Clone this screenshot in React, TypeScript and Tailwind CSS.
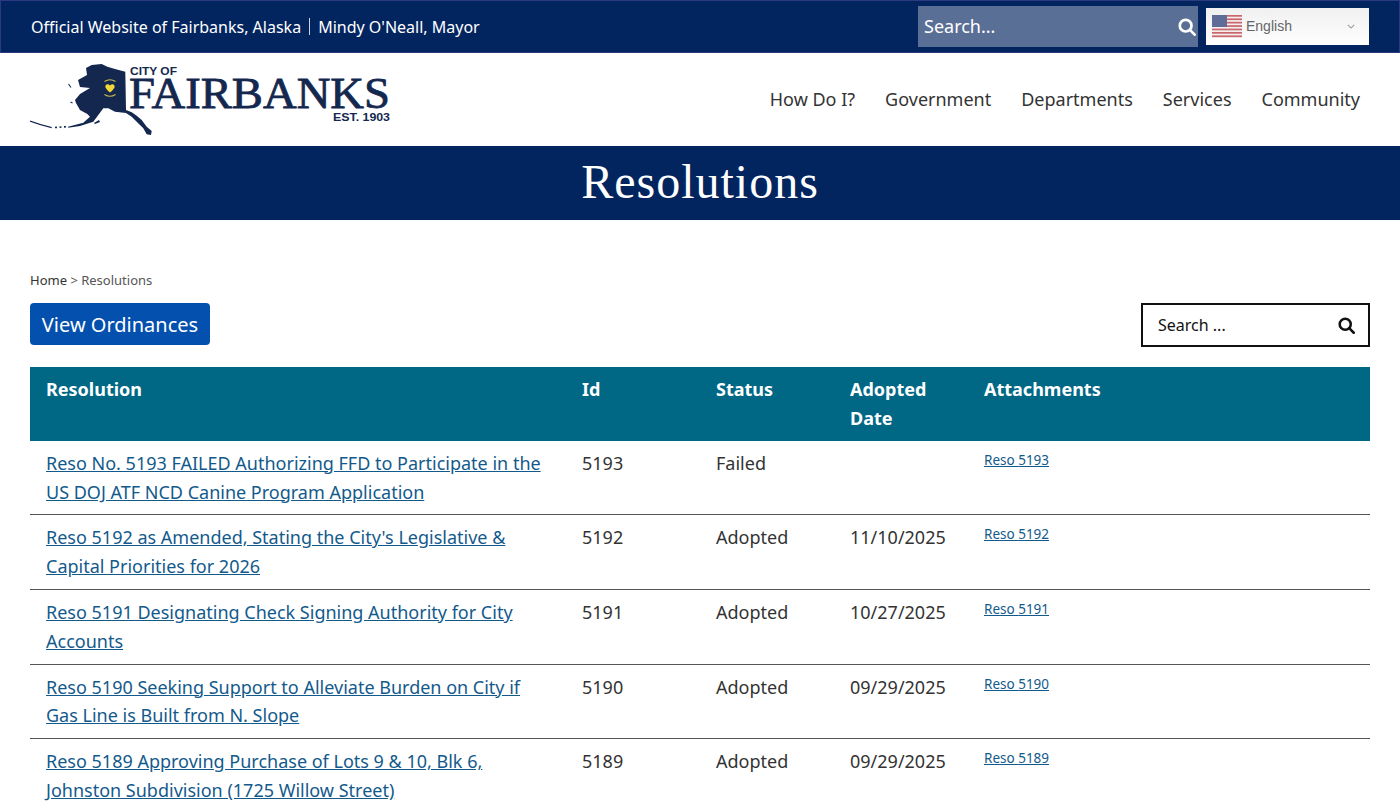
import React from "react";

const rows = [
  { title: "Reso No. 5193 FAILED Authorizing FFD to Participate in the US DOJ ATF NCD Canine Program Application", id: "5193", status: "Failed", date: "" },
  { title: "Reso 5192 as Amended, Stating the City's Legislative & Capital Priorities for 2026", id: "5192", status: "Adopted", date: "11/10/2025" },
  { title: "Reso 5191 Designating Check Signing Authority for City Accounts", id: "5191", status: "Adopted", date: "10/27/2025" },
  { title: "Reso 5190 Seeking Support to Alleviate Burden on City if Gas Line is Built from N. Slope", id: "5190", status: "Adopted", date: "09/29/2025" },
  { title: "Reso 5189 Approving Purchase of Lots 9 & 10, Blk 6, Johnston Subdivision (1725 Willow Street)", id: "5189", status: "Adopted", date: "09/29/2025" },
];

function SearchIcon({ className }: { className: string }) {
  return (
    <svg viewBox="0 0 20 20" className={className} fill="none" stroke="currentColor" strokeWidth="3">
      <circle cx="8.5" cy="8.5" r="6.5" />
      <path d="M13.2 13.2 18.5 18.5" strokeLinecap="round" />
    </svg>
  );
}

function Flag() {
  const stripes = [0, 1, 2, 3, 4, 5, 6];
  return (
    <svg viewBox="0 0 30 23" className="w-[30px] h-[23px] shrink-0">
      <rect width="30" height="23" fill="#f4eeee" />
      {stripes.map((i) => (
        <rect key={i} y={i * 3.4} width="30" height="1.7" fill="#c9676c" />
      ))}
      <rect width="15" height="12" fill="#5f6c98" />
    </svg>
  );
}

function Logo() {
  return (
    <svg viewBox="0 0 362 76" className="w-[362px] h-[76px]">
      <path
        fill="#14284f"
        d="M56 7 L61.7 4 L71.7 3 L77.3 5.7 L85 8 L95.3 10.7 L96 49 L101.7 51.3 L106.7 54.7 L111.7 59 L116.7 65.7 L121.7 70 L121 74 L116.7 73.3 L113.3 67.3 L106.7 60.7 L101.7 55.7 L96 52 L85 50.7 L78.3 47.3 L73.3 47.3 L68.3 54 L63.3 60.7 L50 65 L38.3 66.7 L38 65.7 L53.3 61.7 L60 55.7 L57.3 53 L50 49 L46 42 L45 39 L50 33 L60 27 L50 26 L48 19 L57 14 Z"
      />
      <path fill="none" stroke="#14284f" strokeWidth="1.2" d="M0 60 Q11 64 21.7 66.7" />
      <path fill="none" stroke="#14284f" strokeWidth="1.6" strokeDasharray="2 2.5" d="M25 66.5 L37 65.7" />
      <path fill="none" stroke="#14284f" strokeWidth="1.1" d="M38.5 23 L41 26.5 M40.5 41 L42.5 42" />
      <path fill="#14284f" d="M64 62 l5 -3 1 2 -5 2z" />
      <path fill="#f2d63a" d="M80 24.5 c-2 -2.5 -5.5 -1 -4.5 2 c0.8 1.8 2.8 3.6 4.5 5 c1.7 -1.4 3.7 -3.2 4.5 -5 c1 -3 -2.5 -4.5 -4.5 -2z" />
      <path fill="none" stroke="#c8b64a" strokeWidth="1.2" d="M74.5 20.5 Q80 17 85.5 20.5 M74.5 33.5 Q80 37 85.5 33.5" />
      <text x="100" y="14" fontFamily="'Liberation Sans', sans-serif" fontWeight="700" fontSize="10" fill="#14284f" textLength="47" lengthAdjust="spacingAndGlyphs">CITY OF</text>
      <text x="99" y="47" fontFamily="'Liberation Serif', serif" fontWeight="400" fontSize="45" fill="#14284f" stroke="#14284f" strokeWidth="0.8" textLength="261" lengthAdjust="spacingAndGlyphs">FAIRBANKS</text>
      <text x="303" y="60" fontFamily="'Liberation Sans', sans-serif" fontWeight="700" fontSize="10" fill="#14284f" textLength="57" lengthAdjust="spacingAndGlyphs">EST. 1903</text>
    </svg>
  );
}

export default function App() {
  return (
    <div className="w-[1400px] h-[804px] overflow-hidden bg-white text-[18px] leading-[28.8px] text-[#333] font-['Noto_Sans',sans-serif]">
      <header className="h-[53px] bg-[#03255f] border border-[#2b3a80] flex items-center justify-between pl-[30px] pr-[30px] text-white">
        <div className="flex items-center text-[16px] pt-[1px]">
          <span>Official Website of Fairbanks, Alaska</span>
          <span className="w-px h-[17px] bg-white/80 mx-2"></span>
          <span>Mindy O'Neall, Mayor</span>
        </div>
        <div className="flex items-center gap-2">
          <div className="w-[280px] h-[41px] bg-[#5a6f96] flex items-center justify-between pl-[6px] pr-[2px] text-[18px]">
            <span>Search...</span>
            <SearchIcon className="w-[18px] h-[18px]" />
          </div>
          <div className="w-[163px] h-[37px] bg-gradient-to-b from-[#f0f0f0] to-white flex items-center pl-[6px] pr-[14px] text-[#666] text-[14px] font-['Liberation_Sans',sans-serif]">
            <Flag />
            <span className="ml-1 flex-1 -mt-[1px]">English</span>
            <svg viewBox="0 0 10 6" className="w-[8px] h-[5px]" fill="none" stroke="#999" strokeWidth="1.3">
              <path d="M1 1l4 4 4-4" />
            </svg>
          </div>
        </div>
      </header>

      <nav className="h-[93px] flex items-center justify-between pl-[30px] pr-[40px]">
        <div className="-mt-[1px]"><Logo /></div>
        <div className="flex gap-[30px] text-[#333]">
          <span>How Do I?</span>
          <span>Government</span>
          <span>Departments</span>
          <span>Services</span>
          <span>Community</span>
        </div>
      </nav>

      <div className="h-[74px] bg-[#03255f] flex items-center justify-center">
        <h1 className="text-white text-[48px] leading-none font-['Liberation_Serif',serif] tracking-[1px] -mt-[2px]">Resolutions</h1>
      </div>

      <main className="px-[30px]">
        <div className="pt-[50px] text-[13px] leading-[20px] text-[#555]">
          <span className="text-[#333]">Home</span> &gt; Resolutions
        </div>
        <div className="mt-[13px] flex items-start justify-between">
          <a className="h-[42px] w-[180px] pt-[2px] bg-[#0450ae] text-white text-[20px] rounded flex items-center justify-center">View Ordinances</a>
          <div className="w-[229px] h-[44px] border-2 border-[#111] flex items-center justify-between pl-[15px] pr-[13px] text-[16px] text-[#111]">
            <span>Search ...</span>
            <SearchIcon className="w-[17px] h-[17px]" />
          </div>
        </div>

        <table className="mt-[20.3px] w-[1340px] table-fixed border-collapse">
          <colgroup>
            <col className="w-[536px]" />
            <col className="w-[134px]" />
            <col className="w-[134px]" />
            <col className="w-[134px]" />
            <col className="w-[402px]" />
          </colgroup>
          <thead>
            <tr className="bg-[#006885] text-white font-bold text-left align-top">
              <th className="px-4 py-2">Resolution</th>
              <th className="px-4 py-2">Id</th>
              <th className="px-4 py-2">Status</th>
              <th className="px-4 py-2">Adopted Date</th>
              <th className="px-4 py-2">Attachments</th>
            </tr>
          </thead>
          <tbody>
            {rows.map((r) => (
              <tr key={r.id} className="border-b border-[#555] align-top">
                <td className="px-4 py-2"><a className="underline text-[#135a8c]">{r.title}</a></td>
                <td className="px-4 py-2">{r.id}</td>
                <td className="px-4 py-2">{r.status}</td>
                <td className="px-4 py-2">{r.date}</td>
                <td className="px-4 pt-[9px] pb-2 text-[13.5px] leading-[21.6px]"><a className="underline text-[#135a8c]">Reso {r.id}</a></td>
              </tr>
            ))}
          </tbody>
        </table>
      </main>
    </div>
  );
}
